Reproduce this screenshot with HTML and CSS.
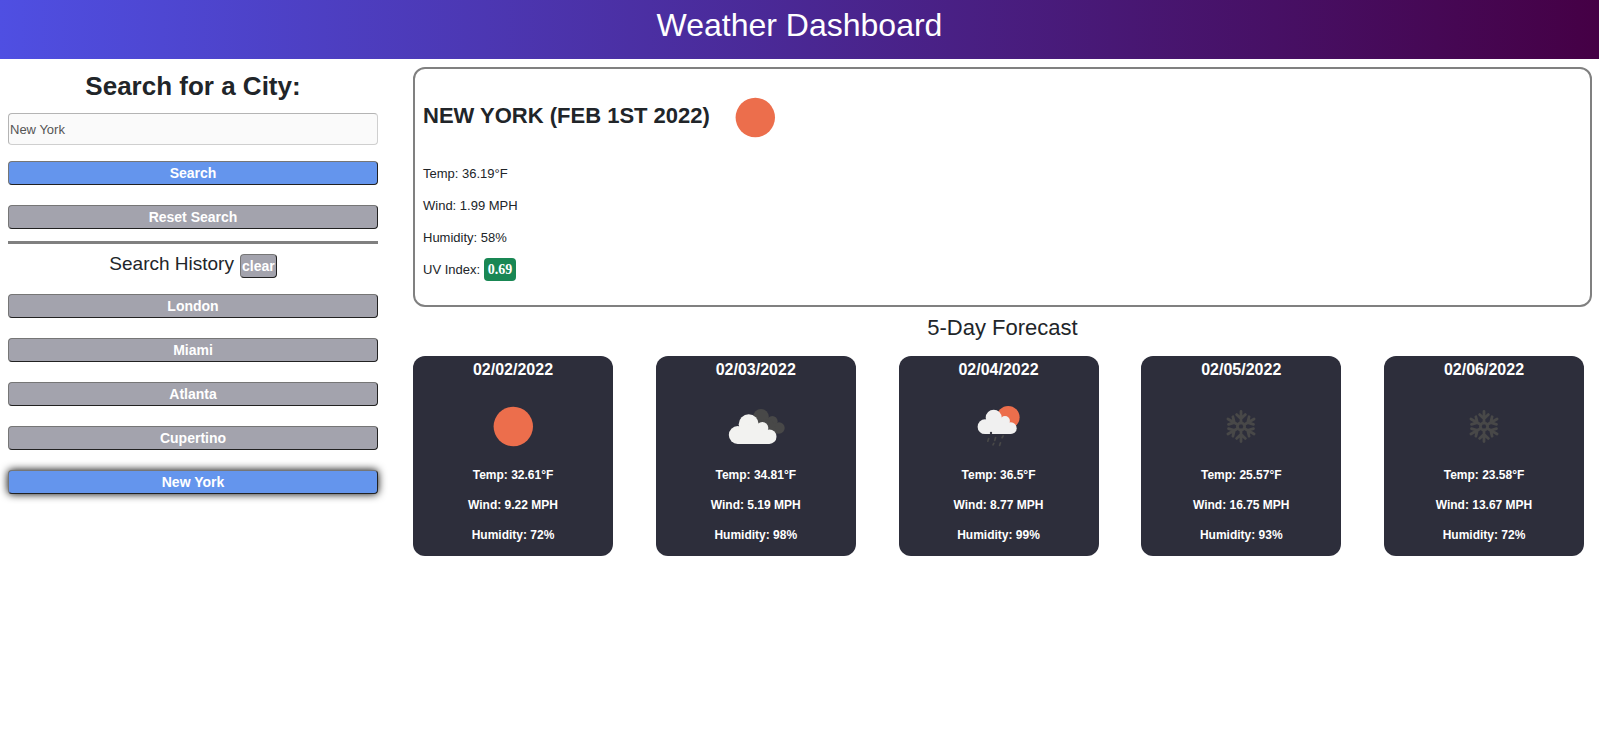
FILE: index.html
```html
<!DOCTYPE html>
<html lang="en">
<head>
<meta charset="utf-8">
<meta name="viewport" content="width=device-width, initial-scale=1">
<title>Weather Dashboard</title>
<link rel="stylesheet" href="styles.css">
</head>
<body>
<svg class="defs" aria-hidden="true">
  <symbol id="sun" viewBox="0 0 100 80"><circle cx="50.3" cy="40.5" r="19.7" fill="#ec6e4c"/></symbol>
  <symbol id="clouds" viewBox="0 0 100 80">
    <g fill="#484848"><circle cx="55" cy="30.7" r="7.8"/><circle cx="66.3" cy="35.3" r="5.3"/><circle cx="73" cy="42" r="5.7"/><path d="M55 33L66 34L72 47.6H62z"/></g>
    <g fill="#f2f2f0"><circle cx="42.7" cy="38.2" r="10"/><circle cx="31.7" cy="49" r="8.9"/><circle cx="56.3" cy="41.9" r="6"/><circle cx="63.3" cy="50.7" r="7.2"/><path d="M31.7 42L42 38L56 42L63.3 46V57.9H31.7z"/></g>
  </symbol>
  <symbol id="rain" viewBox="0 0 100 80">
    <circle cx="59.2" cy="31.3" r="11.4" fill="#ec6e4c"/>
    <g fill="#f0f0f0"><circle cx="44.7" cy="31.7" r="8"/><circle cx="36" cy="40.7" r="7.4"/><circle cx="56" cy="35" r="4.9"/><circle cx="61.8" cy="42.2" r="5.9"/><path d="M36 36L45 32L56 35L61.8 38V48.1H36z"/></g>
    <circle cx="42" cy="47" r="1.2" fill="#373741"/>
    <path d="M39.7 52.5l-.9 2.7M46.6 51.5l-.9 3M54.1 50l-1 1.7M44.8 57.3l-.8 1.5M51.5 56.8l-.9 2.6" stroke="#484848" stroke-width="1.7" stroke-linecap="round"/>
  </symbol>
  <symbol id="snow" viewBox="0 0 100 80">
    <g stroke="#484848" stroke-width="2.8" stroke-linecap="round" fill="none">
      <circle cx="50" cy="40.5" r="3.6"/>
      <g id="arm"><path d="M50 37V25.4M50 32.8l-4.4-4.2M50 32.8l4.4-4.2"/></g>
      <use href="#arm" transform="rotate(60 50 40.5)"/><use href="#arm" transform="rotate(120 50 40.5)"/><use href="#arm" transform="rotate(180 50 40.5)"/><use href="#arm" transform="rotate(240 50 40.5)"/><use href="#arm" transform="rotate(300 50 40.5)"/>
    </g>
  </symbol>
</svg>
<header class="header"><h1 class="title">Weather Dashboard</h1></header>
<main class="layout">
  <aside class="sidebar">
    <form class="search-form">
      <label class="search-label" for="city">Search for a City:</label>
      <input class="search-input" id="city" type="text" value="New York">
      <button class="btn btn-primary" type="button">Search</button>
      <button class="btn" type="reset">Reset Search</button>
    </form>
    <hr class="divider">
    <h2 class="history-title">Search History <button class="btn btn-clear" type="button">clear</button></h2>
    <div class="history">
      <button class="btn" type="button">London</button>
      <button class="btn" type="button">Miami</button>
      <button class="btn" type="button">Atlanta</button>
      <button class="btn" type="button">Cupertino</button>
      <button class="btn btn-primary btn-active" type="button">New York</button>
    </div>
  </aside>
  <div class="content">
    <section class="current">
      <div class="current-head">
        <h2 class="city">NEW YORK (FEB 1ST 2022)</h2>
        <svg class="icon" role="img" aria-label="Clear"><use href="#sun"/></svg>
      </div>
      <p class="stat">Temp: 36.19°F</p>
      <p class="stat">Wind: 1.99 MPH</p>
      <p class="stat">Humidity: 58%</p>
      <p class="stat">UV Index: <span class="uv">0.69</span></p>
    </section>
    <h2 class="forecast-title">5-Day Forecast</h2>
    <section class="forecast">
      <article class="card">
        <h3 class="date">02/02/2022</h3>
        <svg class="icon" role="img" aria-label="Clear"><use href="#sun"/></svg>
        <p class="card-stat">Temp: 32.61°F</p><p class="card-stat">Wind: 9.22 MPH</p><p class="card-stat">Humidity: 72%</p>
      </article>
      <article class="card">
        <h3 class="date">02/03/2022</h3>
        <svg class="icon" role="img" aria-label="Clouds"><use href="#clouds"/></svg>
        <p class="card-stat">Temp: 34.81°F</p><p class="card-stat">Wind: 5.19 MPH</p><p class="card-stat">Humidity: 98%</p>
      </article>
      <article class="card">
        <h3 class="date">02/04/2022</h3>
        <svg class="icon" role="img" aria-label="Rain"><use href="#rain"/></svg>
        <p class="card-stat">Temp: 36.5°F</p><p class="card-stat">Wind: 8.77 MPH</p><p class="card-stat">Humidity: 99%</p>
      </article>
      <article class="card">
        <h3 class="date">02/05/2022</h3>
        <svg class="icon" role="img" aria-label="Snow"><use href="#snow"/></svg>
        <p class="card-stat">Temp: 25.57°F</p><p class="card-stat">Wind: 16.75 MPH</p><p class="card-stat">Humidity: 93%</p>
      </article>
      <article class="card">
        <h3 class="date">02/06/2022</h3>
        <svg class="icon" role="img" aria-label="Snow"><use href="#snow"/></svg>
        <p class="card-stat">Temp: 23.58°F</p><p class="card-stat">Wind: 13.67 MPH</p><p class="card-stat">Humidity: 72%</p>
      </article>
    </section>
  </div>
</main>
</body>
</html>
```
FILE: styles.css
```css
* { box-sizing: border-box; }
body {
  margin: 0;
  background: #fff;
  color: #212529;
  font-family: "Liberation Sans", Arial, sans-serif;
}
h1, h2, h3, p { margin: 0; }
.defs { display: none; }

.header {
  padding: 6px 0 15px;
  background: linear-gradient(to right, #4f4fe2, #450045);
  color: #fff;
  text-align: center;
}
.title { font-size: 32px; font-weight: 400; line-height: 38px; }

.layout {
  display: grid;
  grid-template-columns: 370fr 1179fr;
  gap: 35px;
  padding: 8px 7px 8px 8px;
}

.search-form { display: flex; flex-direction: column; }
.search-label {
  margin: 3px 0 11px;
  font-size: 26px;
  font-weight: 700;
  line-height: 32px;
  text-align: center;
}
.search-input {
  width: 100%;
  height: 32px;
  margin-bottom: 16px;
  padding: 0 1px;
  border: 1px solid;
  border-color: #b4b4b4 #cfcfcf #cfcfcf #b4b4b4;
  border-radius: 4px;
  background: #fafafa;
  color: #555;
  font: 13px "Liberation Sans", Arial, sans-serif;
}
.btn {
  display: block;
  width: 100%;
  height: 24px;
  margin-bottom: 20px;
  padding: 0 1px;
  border: 1px solid;
  border-color: #767676 #212121 #212121 #767676;
  border-radius: 4px;
  background: #a3a3ad;
  color: #fff;
  font: 700 14px/20px "Liberation Sans", Arial, sans-serif;
}
.btn-primary { background: #6495ed; }
.btn-active { box-shadow: 0 0 8px #000; }
.divider {
  height: 3px;
  margin: -8px 0 8px;
  border: 0;
  background: #808080;
}
.history-title {
  display: flex;
  justify-content: center;
  gap: 6px;
  margin: 10px 0 16px;
  font-size: 19px;
  font-weight: 400;
  line-height: 20px;
}
.btn-clear { width: auto; margin: 0; }

.current {
  padding: 0 8px 25px;
  border: 2px solid #808080;
  border-radius: 12px;
}
.current-head { display: flex; align-items: center; height: 95px; padding-top: 1px; }
.city { margin-right: -5px; padding-bottom: 2px; font-size: 22px; font-weight: 700; line-height: 28px; }
.icon { display: block; width: 100px; height: 80px; }
.stat { margin-bottom: 12px; font-size: 13px; line-height: 20px; }
.stat:last-child { margin-bottom: 0; }
.uv {
  padding: 4px;
  border-radius: 4px;
  background: #198754;
  color: #fff;
  font: 700 14px "Liberation Serif", "Times New Roman", serif;
}

.forecast-title {
  margin: 7px 0 14px;
  font-size: 22px;
  font-weight: 400;
  line-height: 28px;
  text-align: center;
}
.forecast {
  display: flex;
  justify-content: space-between;
  padding-right: 8px;
}
.card {
  display: flex;
  flex-direction: column;
  align-items: center;
  width: 200px;
  padding: 2px 0 12px;
  border-radius: 12px;
  background: #2d2e3b;
  color: #fff;
  font-weight: 700;
}
.date { margin-bottom: 4px; font-size: 16px; line-height: 24px; }
.card-stat { margin-bottom: 12px; font-size: 12px; line-height: 18px; }
.card-stat:last-child { margin-bottom: 0; }
```
